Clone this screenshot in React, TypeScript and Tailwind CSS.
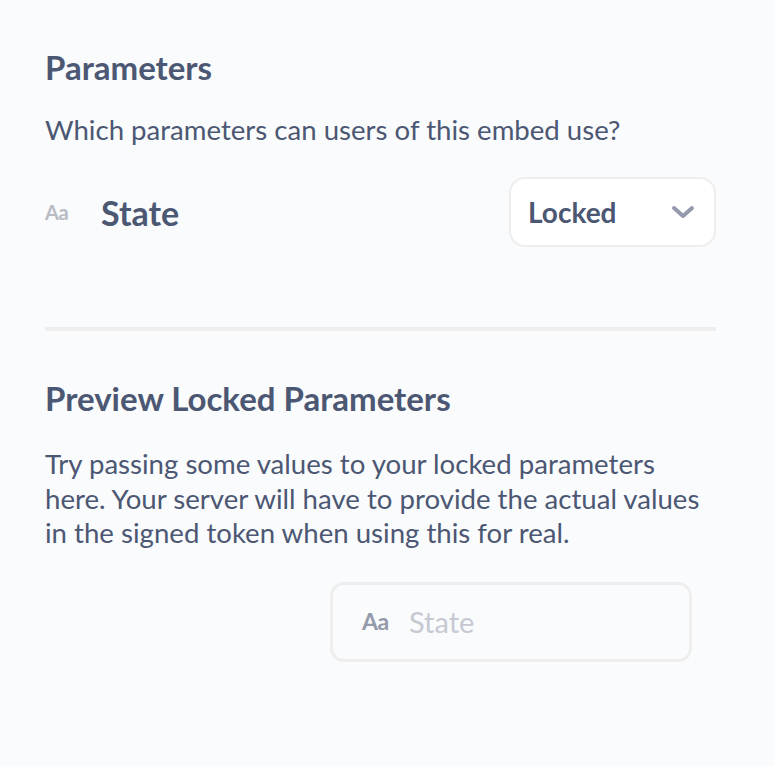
import React from "react";

const Aa = ({ className }: { className?: string }) => (
  <span className={`font-bold tracking-tight ${className ?? ""}`}>Aa</span>
);

const App = () => {
  return (
    <div
      className="min-h-[766px] w-[775px] bg-[#f9fbfc] text-[#4c5773] pl-[45px] pr-[59px] pt-[47px]"
      style={{ fontFamily: "Lato, 'Noto Sans', sans-serif" }}
    >
      <h3 className="text-[33px] font-bold leading-[40px]">Parameters</h3>
      <p className="mt-[26px] text-[27.6px] leading-[34px]">
        Which parameters can users of this embed use?
      </p>

      <div className="mt-[30px] flex items-center justify-between">
        <div className="flex items-center">
          <Aa className="w-[56px] text-[20px] text-[#b8bbc3]" />
          <span className="text-[34px] font-bold">State</span>
        </div>
        <button className="flex h-[70px] w-[207px] items-center justify-between rounded-[16px] border-2 border-[#eeeeee] bg-white pl-[17px] pr-[19px]">
          <span className="text-[28px] font-bold">Locked</span>
          <svg width="24" height="14" viewBox="0 0 24 14" fill="none">
            <path
              d="M3 3l9 8 9-8"
              stroke="#949aab"
              strokeWidth="4"
              strokeLinecap="round"
              strokeLinejoin="round"
            />
          </svg>
        </button>
      </div>

      <div className="mt-[80px] h-[4px] bg-[#eeeeee]" />

      <h3 className="mt-[47px] text-[33px] font-bold leading-[40px]">
        Preview Locked Parameters
      </h3>
      <p className="mt-[29px] w-[664px] text-[27.6px] leading-[34.5px]">
        Try passing some values to your locked parameters here. Your server
        will have to provide the actual values in the signed token when using
        this for real.
      </p>

      <div className="mt-[31px] ml-[285px] flex h-[80px] w-[362px] items-center rounded-[14px] border-[3px] border-[#eeeeee] pl-[29px]">
        <Aa className="w-[47px] text-[23px] text-[#949aab]" />
        <span className="text-[29px] text-[#c6c9d2]">State</span>
      </div>
    </div>
  );
};

export default App;
